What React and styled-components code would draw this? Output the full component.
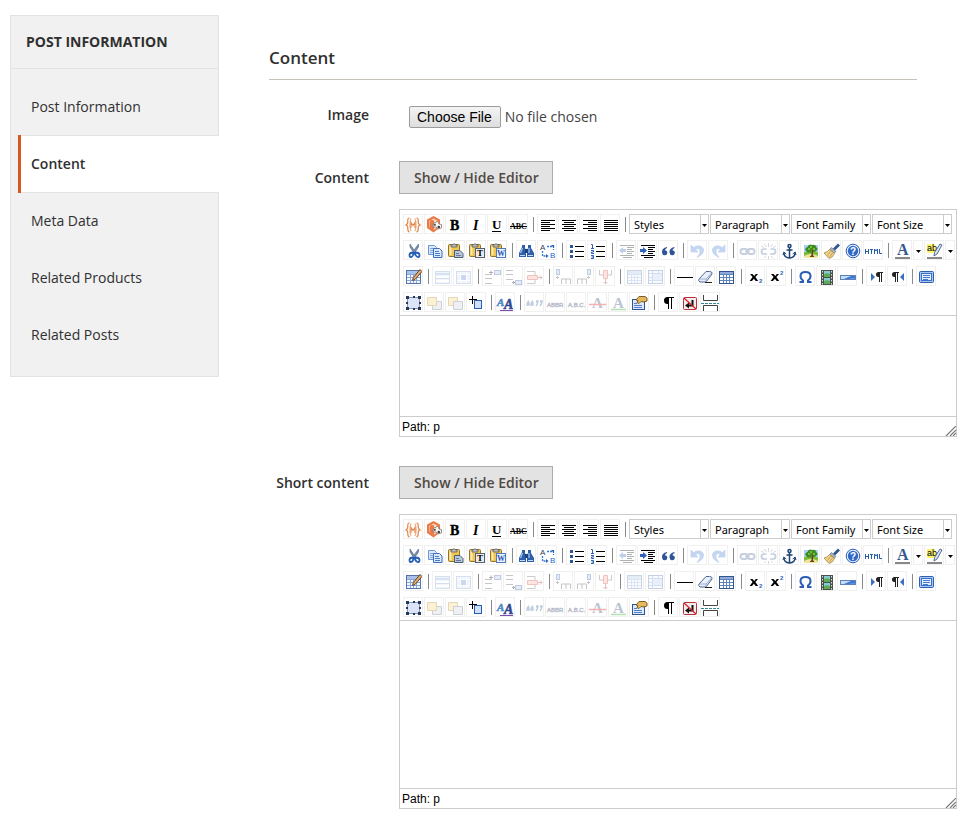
import React from 'react';
import styled, { createGlobalStyle } from 'styled-components';

const GlobalStyle = createGlobalStyle`
  *, *::before, *::after { box-sizing: border-box; }
  body {
    margin: 0;
    background: #fff;
    color: #303030;
    font-family: 'Open Sans', 'Noto Sans', sans-serif;
    font-size: 14px;
    line-height: 24px;
  }
`;

/* ---------- page ---------- */

const Page = styled.div`
  display: flex;
  align-items: flex-start;
  gap: 50px;
  padding: 15px 10px;
`;

const Sidebar = styled.nav`
  flex: 0 0 209px;
  background: #f1f1f1;
  border: 1px solid #e3e3e3;
`;

const SidebarTitle = styled.h2`
  margin: 0;
  padding: 14px 15px;
  border-bottom: 1px solid #e3e3e3;
  font-size: 14px;
  font-weight: 700;
  line-height: 24px;
`;

const TabList = styled.ul`
  list-style: none;
  margin: 0;
  padding: 9px 0 13px 7px;
`;

const TabItem = styled.li`
  margin-right: -1px;
  margin-bottom: ${(p) => (p.$active ? '-1px' : '0')};
`;

const TabLink = styled.a`
  display: block;
  padding: 17px 10px ${(p) => (p.$active ? '17px' : '16px')};
  border-left: 3px solid ${(p) => (p.$active ? '#d9581f' : 'transparent')};
  background: ${(p) => (p.$active ? '#fff' : 'transparent')};
  box-shadow: ${(p) => (p.$active ? 'inset 0 1px #e3e3e3, inset 0 -1px #e3e3e3' : 'none')};
  color: #303030;
  font-weight: ${(p) => (p.$active ? 600 : 400)};
  text-decoration: none;
`;

const Main = styled.form`
  flex: 1;
  min-width: 0;
`;

const SectionTitle = styled.h1`
  margin: 0 40px 23px 0;
  padding: 31px 0 9px;
  border-bottom: 1px solid #c6c3b4;
  font-size: 17px;
  font-weight: 600;
  line-height: 24px;
`;

const Fields = styled.div`
  display: flex;
  flex-direction: column;
  gap: 29px;
`;

const FieldRow = styled.div`
  display: grid;
  grid-template-columns: 100px minmax(0, 1fr);
  column-gap: 30px;
`;

const FieldLabel = styled.label`
  padding-top: ${(p) => (p.$tall ? '5px' : '0')};
  text-align: right;
  font-weight: 600;
  white-space: nowrap;
`;

const FileInput = styled.input`
  display: block;
  margin: 3px 0 4px 10px;
  height: 22px;
  color: #444;
  font: 14px/22px 'Open Sans', sans-serif;

  &::file-selector-button {
    box-sizing: border-box;
    height: 22px;
    padding: 0 8px 0 7px;
    border: 1px solid #9c9c9c;
    border-radius: 2px;
    background: linear-gradient(#f4f4f4, #dedede);
    color: #000;
    font: 14px/20px 'Liberation Sans', Arial, sans-serif;
  }
`;

const ToggleButton = styled.button`
  display: block;
  height: 33px;
  margin: 0 0 15px;
  padding: 0 13px 0 14px;
  border: 1px solid #adadad;
  border-radius: 0;
  background: #e3e3e3;
  color: #514943;
  font: 600 14px/24px 'Open Sans', sans-serif;
`;

/* ---------- editor ---------- */

const EditorFrame = styled.div`
  border: 1px solid #ccc;
  background: #fff;
`;

const Toolbar = styled.div`
  display: flex;
  flex-direction: column;
  gap: 6px;
  padding: 4px 0 3px 3px;
  border-bottom: 1px solid #ccc;
`;

const ToolRow = styled.div`
  display: flex;
  gap: 1px;
  height: 20px;
`;

const ToolButton = styled.button`
  flex: none;
  width: ${(p) => (p.$narrow ? '10px' : '20px')};
  height: 20px;
  padding: 0;
  border: 1px solid #f0f0ee;
  background: transparent;
  overflow: hidden;

  svg { display: block; }
  &:disabled svg { opacity: 0.3; }
`;

const Separator = styled.span`
  flex: none;
  width: 1px;
  height: 15px;
  margin: 3px 2px 0 4px;
  background: #8a8a8a;
`;

const SelectBox = styled.div`
  flex: none;
  display: grid;
  grid-template-columns: 1fr 8px;
  width: 80px;
  height: 20px;
  border: 1px solid #ccc;
`;

const SelectControl = styled.select`
  grid-area: 1 / 1 / 2 / 3;
  min-width: 0;
  padding: 1px 0 0 4px;
  border: 0;
  border-radius: 0;
  background: transparent;
  appearance: none;
  color: #000;
  font: 11px/17px 'Noto Sans', 'Open Sans', sans-serif;
`;

const SelectArrow = styled.span`
  grid-area: 1 / 2 / 2 / 3;
  border-left: 1px solid #ccc;
  pointer-events: none;
  svg { display: block; }
`;

const EditArea = styled.textarea`
  display: block;
  width: 100%;
  height: ${(p) => (p.$large ? '167px' : '100px')};
  padding: 8px;
  border: 0;
  outline: 0;
  resize: none;
  font: 12px/16px 'Liberation Sans', Arial, sans-serif;
`;

const StatusBar = styled.div`
  display: flex;
  justify-content: space-between;
  align-items: flex-end;
  height: 20px;
  padding-left: 2px;
  border-top: 1px solid #ccc;
  color: #000;
  font: 12px/18px 'Liberation Sans', Arial, sans-serif;
  svg { display: block; }
`;

/* ---------- icons: drawn on a 20 unit grid, outer unit is the button border ---------- */

const SERIF = "'Liberation Serif', serif";
const SANS = "'Liberation Sans', sans-serif";

const Board = () => (
  <>
    <rect x="3.5" y="4.5" width="11" height="12" rx="1" fill="#f0c750" stroke="#8f7330" />
    <path d="M5.500 6v9" stroke="#fbe9ae" strokeWidth="2" />
    <path d="M6 7V5h1.500q1.500-3 3 0H12v2z" fill="#b9bfca" stroke="#5e5e5e" strokeWidth=".8" />
  </>
);

const Grid = ({ head }) => (
  <>
    <rect x="3.500" y="4.500" width="14" height="13" fill="#f3f7ff" stroke="#5574ad" />
    {head && <rect x="4" y="5" width="13" height="3" fill="#a9c2ea" />}
    <path d="M4 8.500h13M4 11.500h13M4 14.500h13M7.500 8v9M10.500 8v9M13.500 8v9" stroke="#8aa8dc" />
  </>
);

const ICONS = {
  variable: (
    <g fill="none" stroke="#e2894f" strokeWidth="1.200">
      <path d="M6.500 4Q4.500 4 4.800 7T3 11Q5 11.500 4.800 14.500T6.500 18" />
      <path d="M13.500 4q2 0 1.700 3t1.800 4q-2 .500-1.800 3.500T13.500 18" />
      <path d="M8 4.500Q5.800 10.500 8 17M12 4.500q2.200 6 0 12.500" stroke="#f0b184" />
      <path d="M8 14V8.500l2 3 2-3V14" />
    </g>
  ),
  widget: (
    <>
      <path d="M9.500 2l6.500 3.500v8L9.500 18.500 3 14V5.500z" fill="#ea7a47" />
      <path d="M9.500 4.500L14 7v6l-4.500 3L5 13V7z" fill="#fbd9c6" />
      <path d="M7 5.500l3 1v9l-2 1-2.500-3V8z" fill="#ea7a47" />
      <path d="M9.500 9l2.500-.500 1-1.500 1.500 1 .500 2 2.500.500v3.500L14 15l-1.500-2H9z" fill="#f8f8f8" stroke="#8a7468" strokeWidth=".8" />
      <circle cx="10.800" cy="10.800" r="1.100" fill="#555" />
      <circle cx="14.800" cy="13" r="1.200" fill="#333" />
    </>
  ),
  bold: <text x="5" y="16" fontFamily={SERIF} fontSize="14" fontWeight="700" stroke="#000" strokeWidth=".4">B</text>,
  italic: <text x="7" y="16" fontFamily={SERIF} fontSize="14" fontWeight="700" fontStyle="italic">I</text>,
  underline: (
    <>
      <text x="5" y="15" fontFamily={SERIF} fontSize="13" fontWeight="700">U</text>
      <path d="M5 17.500h9" stroke="#000" />
    </>
  ),
  strike: (
    <>
      <text x="2" y="15" fontFamily={SERIF} fontSize="8" fontWeight="700">ABC</text>
      <path d="M2 12.500h17" stroke="#000" />
    </>
  ),
  left: <path d="M4 6.500h14M4 8.500h9M4 10.500h14M4 12.500h9M4 14.500h14M4 16.500h9" stroke="#000" />,
  center: <path d="M4 6.500h14M6 8.500h10M4 10.500h14M6 12.500h10M4 14.500h14M6 16.500h10" stroke="#000" />,
  right: <path d="M4 6.500h14M9 8.500h9M4 10.500h14M9 12.500h9M4 14.500h14M9 16.500h9" stroke="#000" />,
  justify: <path d="M4 6.500h14M4 8.500h14M4 10.500h14M4 12.500h14M4 14.500h14M4 16.500h14" stroke="#000" />,
  cut: (
    <>
      <path d="M7 4v3l4 6 1-1.500zM15.500 4v3l-4 6-1.500-1.500z" fill="#7d90aa" stroke="#4c6180" strokeWidth=".6" />
      <g fill="none" stroke="#235fb4" strokeWidth="1.800">
        <path d="M10.500 12.500q-4 0-4 2.500 0 2.500 2 2 2-1 2-4.500zM12 12.500q4.500 0 4.500 2.500 0 2.500-2 2-2.500-1-2.500-4.500z" />
      </g>
    </>
  ),
  copy: (
    <>
      <path d="M4.500 5.500h6l2 2v7h-8z" fill="#dce9fd" stroke="#6d95d6" />
      <path d="M6 8.500h4M6 10.500h4M6 12.500h4" stroke="#7fa5df" />
      <path d="M9.500 8.500h6l2.500 2.500v6.500h-8.500z" fill="#dce9fd" stroke="#3d6dbb" />
      <path d="M11 11.500h4M11 13.500h5M11 15.500h5" stroke="#4a7cca" />
    </>
  ),
  paste: (
    <>
      <Board />
      <path d="M9.500 10.500h5.500l3 3v4H9.500z" fill="#b9c8db" stroke="#4c5d73" />
      <path d="M11 13.500h3M11 15.500h5" stroke="#64799a" />
    </>
  ),
  pasteText: (
    <>
      <Board />
      <rect x="9.500" y="8.500" width="9" height="9" fill="#ececec" stroke="#555f75" />
      <text x="11" y="16" fontFamily={SERIF} fontSize="9" fontWeight="700">T</text>
    </>
  ),
  pasteWord: (
    <>
      <Board />
      <rect x="9.500" y="8.500" width="9" height="9" fill="#eef4ff" stroke="#5379b8" />
      <text x="10" y="16" fontFamily={SERIF} fontSize="8" fontWeight="700" fill="#1f58b5">W</text>
    </>
  ),
  find: (
    <>
      <path d="M6 5h3v3l1 2v7H3v-4l3-6zM12 5h3v3l3 5v4h-7v-7l1-2z" fill="#2f5fa8" />
      <path d="M9 9h3v4H9z" fill="#1d437f" />
      <path d="M6.500 8l-2 5M13 8v5" stroke="#a8c6ef" strokeWidth="1.200" />
      <path d="M4 15.500h5M12 15.500h5" stroke="#c4d9f6" />
    </>
  ),
  replace: (
    <>
      <text x="3" y="10" fontFamily={SANS} fontSize="8" fill="#2f4058">A</text>
      <text x="13" y="18" fontFamily={SANS} fontSize="8" fill="#2468d2">B</text>
      <path d="M10 6.500h6.500V10M5.500 11v5H10" fill="none" stroke="#3a78cc" strokeWidth="1.300" strokeDasharray="2 1" />
      <path d="M14 5h3v3zM9 14l2.500 2L9 18z" fill="#2760bd" />
    </>
  ),
  bullets: (
    <>
      <path d="M4 5h3v3H4zM4 10h3v3H4zM4 15h3v3H4z" fill="#2e5596" />
      <path d="M9 6.500h9M9 11.500h9M9 16.500h9" stroke="#000" />
    </>
  ),
  numbers: (
    <>
      <path d="M4 4.500h1.500V8M4 8.500h3M4 10.500h2.500v1.500H4.500v1.500H7M4 15.500h2.500v3H4M4.500 17h2" fill="none" stroke="#2f64b4" />
      <path d="M9 6.500h9M9 11.500h9M9 16.500h9" stroke="#000" />
    </>
  ),
  outdent: (
    <>
      <path d="M4 5.500h14M11 7.500h7M11 9.500h5M11 11.500h7M11 13.500h5M4 15.500h14M7 17.500h9" stroke="#000" />
      <path d="M3 10.500l4-3.500v2h3v3H7v2z" fill="#2f63bd" />
    </>
  ),
  indent: (
    <>
      <path d="M4 5.500h14M11 7.500h7M11 9.500h5M11 11.500h7M11 13.500h5M4 15.500h14M7 17.500h9" stroke="#000" />
      <path d="M10 10.500L6 7v2H3v3h3v2z" fill="#2f63bd" />
    </>
  ),
  quote: (
    <path
      d="M9 7Q3.500 8 4 12.500q.300 2.700 2.700 2.700t2.700-2.500Q9.400 10.300 7 10.200 7 8.700 9 8zM16.500 7Q11 8 11.500 12.500q.300 2.700 2.700 2.700t2.700-2.500q0-2.400-2.400-2.500 0-1.500 2-2.200z"
      fill="#2e5596"
    />
  ),
  undo: (
    <path d="M4 5v7h7L8.500 9.500Q11.500 7.500 13 10q1 3-3 7.500Q17.500 14 16.500 9 13.500 3.500 6.500 7.500z" fill="#3d76d0" stroke="#3d76d0" strokeWidth=".8" />
  ),
  redo: (
    <path d="M17 5v7h-7l2.500-2.500Q9.500 7.500 8 10q-1 3 3 7.500Q3.500 14 4.500 9 7.500 3.500 14.500 7.500z" fill="#3d76d0" stroke="#3d76d0" strokeWidth=".8" />
  ),
  link: (
    <g fill="none" stroke="#405f8f" strokeWidth="1.800">
      <rect x="3.500" y="9" width="7" height="5" rx="2.500" />
      <rect x="10.500" y="9" width="7" height="5" rx="2.500" />
      <path d="M8 11.500h5" strokeWidth="1.200" />
    </g>
  ),
  unlink: (
    <g fill="none" stroke="#405f8f" strokeWidth="1.700">
      <path d="M8.500 9H6q-2.500 0-2.500 2.500T6 14h3M12.500 9H15q2.500 0 2.500 2.500T15 14h-3" />
      <path d="M10.500 3v4M6 4l2.500 3M15 4l-2.500 3M10.500 16v3M6 18l2-2M15 18l-2-2M3 6l3 1.500M18 6l-3 1.500" strokeWidth=".8" />
    </g>
  ),
  anchor: (
    <g fill="none" stroke="#1f4275" strokeWidth="1.500">
      <circle cx="10.500" cy="6" r="1.500" />
      <path d="M10.500 7.500v10M7.500 10h6M5 13q0 4.500 5.500 5 5.500-.500 5.500-5" />
      <path d="M4 15l.800-3 2.500 2M17 15l-.800-3-2.500 2" strokeWidth="1" />
    </g>
  ),
  image: (
    <>
      <path d="M4 5h14v7H4z" fill="#a9d0f6" />
      <path d="M4 12h14v6H4z" fill="#7cbb35" />
      <path d="M4 16q7-4 14 0v2H4z" fill="#f0e6a0" />
      <path d="M6 11q-2-3 1.500-4Q9 3.500 12 5q4-1 4 2 3 2 0 4-2 2-4.500 1Q8 13.500 6 11z" fill="#3d8a20" />
      <path d="M10 7h2M8 9h2M13 9h2M11 11h1" stroke="#8ad14a" strokeWidth="1.400" />
      <path d="M11.500 10v5l-2 2h5l-1.500-2v-5z" fill="#6b4216" />
    </>
  ),
  cleanup: (
    <>
      <path d="M18 4.500l-5 5" stroke="#34568f" strokeWidth="2.800" />
      <path d="M10.500 7.500l4.500 4-2 2L8.500 9.500z" fill="#a5afbb" stroke="#5b687a" strokeWidth=".6" />
      <path d="M8.500 9.500l5 4Q12 17.500 8 18.500L3 13Q6.500 12.500 8.500 9.500z" fill="#f0d490" stroke="#a8843b" strokeWidth=".8" />
      <path d="M9.500 11.500l-3 4M11.500 13L8.500 17" stroke="#b98f3e" strokeWidth=".8" />
    </>
  ),
  help: (
    <>
      <circle cx="11" cy="11" r="6.800" fill="#e8f1ff" stroke="#2a5caf" strokeWidth="1" />
      <circle cx="11" cy="11" r="5.200" fill="#3168c4" />
      <text x="8" y="15" fontFamily={SANS} fontSize="10" fontWeight="700" fill="#fff">?</text>
    </>
  ),
  html: (
    <path
      d="M2.500 9v5M5.500 9v5M2.500 11.500h3M7 9.500h3M8.500 9v5M11.500 14V9l1.500 2 1.500-2v5M16.500 9v4.500H19"
      fill="none"
      stroke="#285da8"
    />
  ),
  foreColor: (
    <>
      <text x="5" y="15" fontFamily={SERIF} fontSize="16" fontWeight="700" fill="#35578f">A</text>
      <path d="M3 17h15v3H3z" fill="#888" />
    </>
  ),
  backColor: (
    <>
      <path d="M3 4h8v9H3z" fill="#fff36b" />
      <text x="3" y="11" fontFamily={SANS} fontSize="9">ab</text>
      <path d="M18 5l-5 9-3 2 .500-3.500L16 4z" fill="#d8e5f5" stroke="#3f5f88" strokeWidth=".9" />
      <path d="M3 17h15v3H3z" fill="#888" />
    </>
  ),
  drop: <path d="M3 10h5L5.500 13z" fill="#000" />,
  table: (
    <>
      <Grid head />
      <path d="M17 3.500L19 5.500l-7 8-2.500 1 .700-2.800z" fill="#dfa970" stroke="#5a3a1c" strokeWidth=".9" />
    </>
  ),
  rowProps: (
    <>
      <rect x="3.500" y="5.500" width="14" height="12" fill="#cfdff8" stroke="#7898d0" />
      <path d="M4 7h13v2H4z" fill="#7da3e0" />
      <path d="M4 11h13M4 15h13" stroke="#fff" strokeWidth="2" />
      <path d="M4 12.500h13" stroke="#7898d0" />
    </>
  ),
  cellProps: (
    <>
      <rect x="3.500" y="5.500" width="14" height="12" fill="#cfdff8" stroke="#7898d0" />
      <path d="M4 8.500h13M4 14.500h13M7.500 6v11M13.500 6v11" stroke="#fff" />
      <path d="M8 9h5v5H8z" fill="#5580cc" />
    </>
  ),
  rowBefore: (
    <>
      <path d="M3 8.500h7M3 12.500h7M3 17.500h7" stroke="#444" fill="none" />
      <path d="M7 6.500h4M9 4.500v4" stroke="#000" />
      <rect x="12.500" y="4.500" width="6" height="4" fill="#a8c1f0" stroke="#2d55a8" />
    </>
  ),
  rowAfter: (
    <>
      <path d="M3 4.500h7M3 8.500h7M3 13.500h7" stroke="#444" fill="none" />
      <path d="M9 16.500h3M10.500 15v3" stroke="#000" />
      <rect x="12.500" y="14.500" width="6" height="4" fill="#a8c1f0" stroke="#2d55a8" />
    </>
  ),
  deleteRow: (
    <>
      <path d="M3 5.500h8v4M3 17.500h8v-4" stroke="#555" fill="none" />
      <path d="M3.500 9.500h10v4h-10z" fill="#ffa8a0" stroke="#d33427" />
      <path d="M13 11.500h5M16 9.500l2 2-2 2" stroke="#a32020" fill="none" />
    </>
  ),
  colBefore: (
    <>
      <rect x="3.500" y="3.500" width="3" height="5" fill="#a8c1f0" stroke="#2d55a8" />
      <path d="M4.500 10v3M3 11.500h3M8.500 18v-5h9v5M13 13v5" stroke="#444" fill="none" />
    </>
  ),
  colAfter: (
    <>
      <rect x="13.500" y="3.500" width="3" height="5" fill="#a8c1f0" stroke="#2d55a8" />
      <path d="M14.500 10v3M13 11.500h3M3.500 18v-5h9v5M8 13v5" stroke="#444" fill="none" />
    </>
  ),
  deleteCol: (
    <>
      <path d="M4.500 4v5h4M16.500 4v5h-4" stroke="#555" fill="none" />
      <path d="M8.500 4.500h4v8h-4z" fill="#ffa8a0" stroke="#d33427" />
      <path d="M10.500 13v5M8.500 16l2 2 2-2" stroke="#a32020" fill="none" />
    </>
  ),
  splitCells: <Grid head />,
  mergeCells: (
    <>
      <rect x="3.500" y="4.500" width="14" height="13" fill="#eaf2ff" stroke="#4468a8" />
      <path d="M4 7.500h13M7.500 5v12M4 14.500h13M13.500 5v3M4 11.500h3" stroke="#6f93cc" />
      <path d="M8 8h9v6H8z" fill="#b9d0f5" />
    </>
  ),
  rule: <path d="M3 11.500h16" stroke="#000" />,
  eraser: (
    <>
      <path d="M11 5.500h3.500q3 0 2.500 2.500l-6 8H5q-2-1-1-3z" fill="#e9f0fb" stroke="#4c6792" />
      <path d="M4.500 13h6.500l6-6.500M11 13v3" fill="none" stroke="#9db1cf" />
      <path d="M10 16.500h7" stroke="#222" />
    </>
  ),
  visualTable: (
    <>
      <rect x="3.500" y="5.500" width="14" height="12" fill="#fff" stroke="#33558f" />
      <path d="M4 6h13v2H4z" fill="#8fabd9" />
      <path d="M4 8.500h13M4 11.500h13M4 14.500h13M7.500 8v9M10.500 8v9M13.500 8v9" stroke="#5f83bd" />
    </>
  ),
  sub: (
    <>
      <path d="M5 8h2.500l1.800 2 1.500-2H13l-2.600 3 2.800 4h-2.500l-1.800-2.200L7 15H4.600l3-4z" fill="#000" />
      <text x="14" y="17" fontFamily={SANS} fontSize="6" fontWeight="700" fill="#2a5fc0">2</text>
    </>
  ),
  sup: (
    <>
      <path d="M5 8h2.500l1.800 2 1.500-2H13l-2.600 3 2.800 4h-2.500l-1.800-2.200L7 15H4.600l3-4z" fill="#000" />
      <text x="14" y="9" fontFamily={SANS} fontSize="6" fontWeight="700" fill="#2a5fc0">2</text>
    </>
  ),
  omega: (
    <path
      d="M4.500 16h3.500v-1.500Q5.500 13 5.500 10q0-4 5-4t5 4q0 3-2.500 4.500V16h3.500"
      fill="none"
      stroke="#2c5eb5"
      strokeWidth="2"
    />
  ),
  media: (
    <>
      <path d="M5 4h12v15H5z" fill="#4a504b" />
      <path d="M8 5h6v6H8zM8 12h6v6H8z" fill="#85cbd2" />
      <path d="M8 8.500q3-2.500 6 0V11H8zM8 15.500q3-2.500 6 0V18H8z" fill="#5cab55" />
      <path d="M6.500 5v14M15.500 5v14" stroke="#ddd" strokeDasharray="1.500 1.500" />
    </>
  ),
  advRule: (
    <>
      <rect x="3.500" y="9.500" width="15" height="4" fill="#3f78cf" stroke="#5c82bd" />
      <path d="M4 10h10l-7 3H4z" fill="#c6dcfb" />
      <path d="M13 12.500h5" stroke="#5d90dc" />
    </>
  ),
  ltr: (
    <>
      <path d="M5 7l4 4-4 4z" fill="#3a6ec4" />
      <path d="M17 6h-4.500Q10 6 10 8.500t2.500 2.500h.500v5h1V7h1v9h1V7h1z" fill="#222" />
    </>
  ),
  rtl: (
    <>
      <path d="M17 7l-4 4 4 4z" fill="#3a6ec4" />
      <path d="M12 6H7.500Q5 6 5 8.500T7.500 11H8v5h1V7h1v9h1V7h1z" fill="#222" />
    </>
  ),
  fullscreen: (
    <>
      <rect x="3.500" y="5.500" width="14" height="11" rx="1" fill="#a8c6f4" stroke="#2e5fae" />
      <rect x="5.500" y="7.500" width="10" height="7" fill="#e3eefe" stroke="#3c70c4" />
      <path d="M7 9.500h7M7 11.500h7M7 13.500h5" stroke="#4a7bce" />
    </>
  ),
  layer: (
    <>
      <path d="M4.500 5.500h12v11h-12z" fill="#dbe5f7" stroke="#8797b3" />
      <path d="M3 4h3v3H3zM15 4h3v3h-3zM3 15h3v3H3zM15 15h3v3h-3zM10 4h2v2h-2zM10 16h2v2h-2zM3 10h2v2H3zM16 10h2v2h-2z" fill="#24395d" />
    </>
  ),
  forward: (
    <>
      <path d="M8.500 9.500h9v8h-9z" fill="#c9cfdb" stroke="#59657b" />
      <path d="M3.500 5.500h9v8h-9z" fill="#f6d365" stroke="#a37d1e" />
    </>
  ),
  backward: (
    <>
      <path d="M3.500 5.500h9v8h-9z" fill="#f6d365" stroke="#a37d1e" />
      <path d="M8.500 9.500h9v8h-9z" fill="#c9cfdb" stroke="#59657b" />
    </>
  ),
  absolute: (
    <>
      <rect x="8.500" y="8.500" width="7" height="8" fill="#cfe0fb" stroke="#2b5cb0" />
      <path d="M3 7.500h8M6.500 4v8" stroke="#000" />
    </>
  ),
  styleProps: (
    <>
      <text x="2" y="14" fontFamily={SERIF} fontSize="11" fontWeight="700" fontStyle="italic" fill="#4d8ac4" stroke="#4d8ac4" strokeWidth=".5">A</text>
      <text x="9" y="17" fontFamily={SERIF} fontSize="14" fontWeight="700" fontStyle="italic" fill="#33478f" stroke="#33478f" strokeWidth=".5">A</text>
      <path d="M5 18.500h13" stroke="#7b4bb0" />
    </>
  ),
  cite: (
    <path
      d="M5 9q-2 1-2 4h2v-2H4M9 9q-2 1-2 4h2v-2H8M12 9h2q0 3-2 5M13 9v2M16 9h2q0 3-2 5M17 9v2"
      fill="none"
      stroke="#2e5596"
      strokeWidth="1.400"
    />
  ),
  abbr: <text x="2" y="15" fontFamily={SANS} fontSize="6" fill="#0d2350" stroke="#0d2350" strokeWidth=".4">ABBR</text>,
  acronym: <text x="2" y="15" fontFamily={SANS} fontSize="6" fill="#0d2350" stroke="#0d2350" strokeWidth=".4">A.B.C.</text>,
  del: (
    <>
      <text x="5" y="16" fontFamily={SERIF} fontSize="15" fontWeight="700" fill="#1c3c78">A</text>
      <path d="M2 12.500h17" stroke="#e00000" strokeWidth="1.500" />
    </>
  ),
  ins: (
    <>
      <text x="5" y="16" fontFamily={SERIF} fontSize="15" fontWeight="700" fill="#1c3c78">A</text>
      <path d="M3 17.500h15" stroke="#0a9a0a" strokeWidth="1.500" />
    </>
  ),
  attributes: (
    <>
      <rect x="3.500" y="7.500" width="12" height="10" fill="#dce8fb" stroke="#2c5597" />
      <path d="M5 11.500h3M5 13.500h8M5 15.500h8" stroke="#557fc3" />
      <path d="M7 8l3-3.500h6l2 1.500v3l-3 1-3-.500-2 2-2-1 1-2z" fill="#e6b85c" stroke="#6f5120" strokeWidth=".9" />
    </>
  ),
  chars: <path d="M16 5H9.500Q6 5 6 8.500T9.500 12h.500v5h1V6h2v11h1V6h2z" fill="#000" />,
  nonBreaking: (
    <>
      <rect x="4.500" y="5.500" width="13" height="12" rx="1" fill="#f3ecec" stroke="#b9323a" />
      <path d="M13.500 8v5.500H8" fill="none" stroke="#111" strokeWidth="2" />
      <path d="M10 10.500v6l-4-3z" fill="#111" />
      <path d="M5 6l12 11" stroke="#d8202c" strokeWidth="1.200" />
    </>
  ),
  pageBreak: (
    <>
      <path d="M3.500 3v5.500h14V3M3.500 19v-5.500h14V19" fill="none" stroke="#444" />
      <path d="M1 11.500h19" stroke="#3a8595" strokeDasharray="3 1" />
    </>
  ),
};

const Icon = ({ name, narrow }) => (
  <svg width={narrow ? 8 : 18} height="18" viewBox={narrow ? '1 1 8 18' : '1 1 18 18'} aria-hidden="true">
    {ICONS[name]}
  </svg>
);

/* A leading "-" marks a button that is switched off; "|" is a separator. */
const TOOL_ROWS = [
  'variable widget bold italic underline strike | left center right justify | #Styles #Paragraph #Font_Family #Font_Size',
  'cut copy paste pasteText pasteWord | find replace | bullets numbers | -outdent indent quote | -undo -redo | -link -unlink anchor image cleanup help html | foreColor drop backColor drop',
  'table | -rowProps -cellProps | -rowBefore -rowAfter -deleteRow | -colBefore -colAfter -deleteCol | -splitCells -mergeCells | rule eraser visualTable | sub sup | omega media advRule | ltr rtl | fullscreen',
  'layer -forward -backward absolute | styleProps | -cite -abbr -acronym -del -ins attributes | chars nonBreaking pageBreak',
].map((row) => row.split(' '));

const Tool = ({ token }) => {
  if (token === '|') return <Separator />;
  if (token[0] === '#') {
    const label = token.slice(1).replace('_', ' ');
    return (
      <SelectBox>
        <SelectControl aria-label={label}>
          <option>{label}</option>
        </SelectControl>
        <SelectArrow>
          <svg width="7" height="18" viewBox="0 0 7 18" aria-hidden="true">
            <path d="M1 9h5L3.500 12z" fill="#000" />
          </svg>
        </SelectArrow>
      </SelectBox>
    );
  }
  const disabled = token[0] === '-';
  const name = disabled ? token.slice(1) : token;
  const narrow = name === 'drop';
  return (
    <ToolButton type="button" aria-label={name} disabled={disabled} $narrow={narrow}>
      <Icon name={name} narrow={narrow} />
    </ToolButton>
  );
};

const Editor = ({ id, large }) => (
  <EditorFrame>
    <Toolbar role="toolbar">
      {TOOL_ROWS.map((row, r) => (
        <ToolRow key={r}>
          {row.map((token, i) => (
            <Tool key={i} token={token} />
          ))}
        </ToolRow>
      ))}
    </Toolbar>
    <EditArea id={id} $large={large} />
    <StatusBar>
      <span>Path: p</span>
      <svg width="11" height="10" viewBox="0 0 11 10" aria-hidden="true">
        <path d="M1 10L11 0M5 10l6-6M8 10l3-3" stroke="#777" strokeWidth="1.200" />
      </svg>
    </StatusBar>
  </EditorFrame>
);

const EditorField = ({ id, label, large }) => (
  <FieldRow>
    <FieldLabel htmlFor={id} $tall>{label}</FieldLabel>
    <div>
      <ToggleButton type="button">Show / Hide Editor</ToggleButton>
      <Editor id={id} large={large} />
    </div>
  </FieldRow>
);

const TABS = ['Post Information', 'Content', 'Meta Data', 'Related Products', 'Related Posts'];

export default function App() {
  return (
    <>
      <GlobalStyle />
      <Page>
        <Sidebar>
          <SidebarTitle>POST INFORMATION</SidebarTitle>
          <TabList>
            {TABS.map((tab) => (
              <TabItem key={tab} $active={tab === 'Content'}>
                <TabLink href="#" $active={tab === 'Content'}>{tab}</TabLink>
              </TabItem>
            ))}
          </TabList>
        </Sidebar>
        <Main>
          <SectionTitle>Content</SectionTitle>
          <Fields>
            <FieldRow>
              <FieldLabel htmlFor="image">Image</FieldLabel>
              <FileInput id="image" type="file" />
            </FieldRow>
            <EditorField id="content" label="Content" />
            <EditorField id="short-content" label="Short content" large />
          </Fields>
        </Main>
      </Page>
    </>
  );
}
